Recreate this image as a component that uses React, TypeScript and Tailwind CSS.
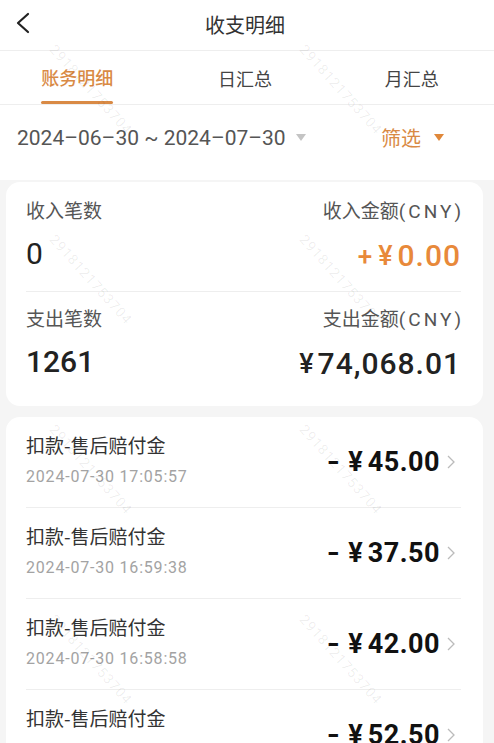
import React from 'react';

const num = { fontFamily: 'Roboto, "Noto Sans CJK SC", sans-serif' };
const cjk = { fontFamily: '"Noto Sans CJK SC", "Liberation Sans", sans-serif' };

const records = [
  { amount: '45.00', time: '2024-07-30 17:05:57' },
  { amount: '37.50', time: '2024-07-30 16:59:38' },
  { amount: '42.00', time: '2024-07-30 16:58:58' },
  { amount: '52.50', time: '2024-07-30 16:57:41' },
];

const marks = [
  [60, 40], [310, 40],
  [60, 230], [310, 230],
  [60, 420], [310, 420],
  [60, 610], [310, 610],
];

const Label: React.FC<{ text: string; cny?: boolean }> = ({ text, cny }) => (
  <span className="text-[19px] leading-[24px] text-[#555]">
    {text}
    {cny && (
      <span className="tracking-[3px]" style={num}>
        (CNY<span className="tracking-normal">)</span>
      </span>
    )}
  </span>
);

const App: React.FC = () => {
  return (
    <div className="relative w-[494px] h-[743px] overflow-hidden bg-[#f5f5f5]" style={cjk}>
      {/* header */}
      <div className="relative flex items-center justify-center h-[51px] bg-white border-b border-[#eeeeee]">
        <svg className="absolute left-[14px] top-[12px]" width="20" height="22" viewBox="0 0 20 22" fill="none">
          <polyline points="14,2 4,11 14,20" stroke="#222" strokeWidth="2.2" strokeLinecap="round" strokeLinejoin="round" />
        </svg>
        <span className="text-[20px] leading-[28px] text-[#333] mr-[4px]">收支明细</span>
      </div>

      {/* tabs */}
      <div className="grid grid-cols-3 h-[54px] bg-white border-b border-[#eeeeee]">
        <div className="flex flex-col items-center justify-end">
          <span className="text-[18px] leading-[26px] text-[#d98a45] font-medium mr-[10px]">账务明细</span>
          <span className="block w-[72px] h-[3px] mt-[11px] mr-[10px] rounded-full bg-[#d98a45]" />
        </div>
        <div className="flex items-center justify-center">
          <span className="text-[18px] leading-[26px] text-[#444] mr-[4px]">日汇总</span>
        </div>
        <div className="flex items-center justify-center">
          <span className="text-[18px] leading-[26px] text-[#444]">月汇总</span>
        </div>
      </div>

      {/* date range */}
      <div className="flex items-start justify-between h-[75px] pt-[18px] pl-[17px] pr-[50px] bg-white">
        <div className="flex items-center">
          <span className="text-[21px] leading-[30px] text-[#555]" style={num}>
            2024–06–30 ~ 2024–07–30
          </span>
          <svg className="ml-[10px]" width="10" height="8" viewBox="0 0 10 8">
            <polygon points="0,0 10,0 5,7" fill="#c4c4c4" />
          </svg>
        </div>
        <div className="flex items-center">
          <span className="text-[20px] leading-[30px] text-[#d98a45] ml-[2px]">筛选</span>
          <svg className="ml-[13px]" width="10" height="8" viewBox="0 0 10 8">
            <polygon points="0,0 10,0 5,7" fill="#e0883a" />
          </svg>
        </div>
      </div>

      {/* summary card */}
      <div className="ml-[6px] mr-[11px] mt-[2px] rounded-[14px] bg-white pl-[20px] pr-[22px]">
        <div className="flex justify-between pt-[16px] pb-[17px] border-b border-[#eeeeee]">
          <div className="flex flex-col">
            <Label text="收入笔数" />
            <span className="mt-[14px] text-[30px] leading-[36px] text-[#222]" style={num}>0</span>
          </div>
          <div className="flex flex-col items-end">
            <Label text="收入金额" cny />
            <span className="flex items-center mt-[14px] text-[30px] leading-[36px] text-[#e8893a] font-medium" style={num}>
              <span className="text-[26px]">+</span>
              <span className="ml-[6px] text-[27px]">¥</span>
              <span className="ml-[5px] tracking-[1px]">0.00</span>
            </span>
          </div>
        </div>
        <div className="flex justify-between pt-[14px] pb-[24px]">
          <div className="flex flex-col">
            <Label text="支出笔数" />
            <span className="mt-[14px] text-[30px] leading-[36px] text-[#222] font-medium" style={num}>1261</span>
          </div>
          <div className="flex flex-col items-end">
            <Label text="支出金额" cny />
            <span className="flex items-center mt-[14px] text-[30px] leading-[36px] text-[#222] font-medium" style={num}>
              <span className="text-[27px]">¥</span>
              <span className="ml-[4px] tracking-[1px]">74,068.01</span>
            </span>
          </div>
        </div>
      </div>

      {/* records */}
      <div className="ml-[6px] mr-[11px] mt-[11px] rounded-t-[14px] bg-white pl-[20px] pr-[22px]">
        {records.map((r, i) => (
          <div key={i} className="flex items-center justify-between pt-[16px] pb-[20px] border-b border-[#eeeeee]">
            <div className="flex flex-col">
              <span className="text-[19px] leading-[24px] text-[#333]">扣款-售后赔付金</span>
              <span className="mt-[10px] text-[16px] leading-[20px] tracking-[0.8px] text-[#a3a3a3]" style={num}>{r.time}</span>
            </div>
            <div className="flex items-center mt-[4px] mr-[6px]">
              <span className="flex items-center text-[27px] leading-[32px] font-bold text-[#111]" style={num}>
                <span className="scale-x-125">-</span>
                <span className="ml-[10px]">¥</span>
                <span className="ml-[5px] tracking-[0.5px]">{r.amount}</span>
              </span>
              <svg className="ml-[7px]" width="8" height="14" viewBox="0 0 8 14" fill="none">
                <polyline points="1,1 7,7 1,13" stroke="#bbb" strokeWidth="1.3" />
              </svg>
            </div>
          </div>
        ))}
      </div>

      {/* watermark */}
      {marks.map(([x, y], i) => (
        <span
          key={i}
          className="pointer-events-none absolute origin-top-left rotate-[48deg] text-[14px] tracking-[1px] text-black/[0.07]"
          style={{ left: x, top: y, ...num }}
        >
          2918121753704
        </span>
      ))}
    </div>
  );
};

export default App;
